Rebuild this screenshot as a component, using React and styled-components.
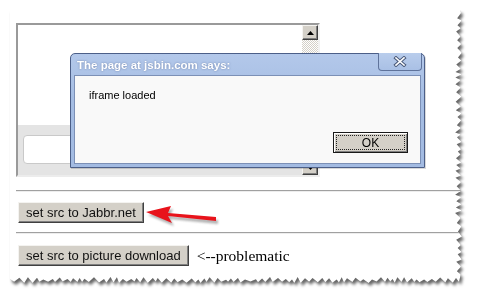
import React from 'react';
import styled, { createGlobalStyle } from 'styled-components';

const GlobalStyle = createGlobalStyle`
  html, body { margin: 0; padding: 0; background: #ffffff; }
  body { font-family: "Liberation Sans", Arial, sans-serif; }
`;

const PAPER_W = 452;
const PAPER_H = 273;

function tornPolygon(W, H, dR, dB) {
  let seed = 11;
  const rnd = () => {
    seed = (seed * 9301 + 49297) % 233280;
    return seed / 233280;
  };
  const pts = ['0px 0px', `${W - 2}px 0px`];
  let y = 3;
  let out = true;
  while (y < H - dB - 2) {
    const x = out ? W - rnd() * 1.5 : W - dR * (0.55 + rnd() * 0.45);
    pts.push(`${x.toFixed(1)}px ${y.toFixed(1)}px`);
    y += 2 + rnd() * 3.5;
    out = !out;
  }
  pts.push(`${W - 3}px ${H - 1}px`);
  let x = W - 6;
  out = false;
  while (x > 3) {
    const yy = out ? H - rnd() * 1.5 : H - dB * (0.55 + rnd() * 0.45);
    pts.push(`${x.toFixed(1)}px ${yy.toFixed(1)}px`);
    x -= 2 + rnd() * 3.5;
    out = !out;
  }
  pts.push(`0px ${H - 4}px`);
  return `polygon(${pts.join(', ')})`;
}

const TORN = tornPolygon(PAPER_W, PAPER_H, 7, 6);

const Stage = styled.div`
  padding: 10px 0 0 10px;
  width: 481px;
  height: 300px;
  box-sizing: border-box;
  overflow: hidden;
`;

const Shadow = styled.div`
  width: ${PAPER_W}px;
  filter: drop-shadow(0 0 0.6px rgba(0, 0, 0, 0.25)) drop-shadow(2px 3px 1.5px rgba(0, 0, 0, 0.6));
`;

const Paper = styled.div`
  position: relative;
  width: ${PAPER_W}px;
  height: ${PAPER_H}px;
  background: #ffffff;
  clip-path: ${TORN};
  box-sizing: border-box;
  padding: 13px 0 0 6px;
  display: flex;
  flex-direction: column;
`;

const Frame = styled.div`
  width: 304px;
  height: 154px;
  box-sizing: border-box;
  border: 2px solid;
  border-color: #9a9a9a #f2f2f2 #ececec #9a9a9a;
  display: flex;
`;

const FrameBody = styled.div`
  flex: 1;
  display: flex;
  flex-direction: column;
`;

const FrameTop = styled.div`
  flex: 1;
  background: #ffffff;
`;

const GrayBand = styled.div`
  height: 50px;
  background: #e4e4e4;
  box-sizing: border-box;
  padding: 10px 0 0 5px;
`;

const InputBox = styled.div`
  width: 262px;
  height: 29px;
  box-sizing: border-box;
  background: #ffffff;
  border: 1px solid #c9c9c9;
  border-radius: 4px;
`;

const Scrollbar = styled.div`
  width: 16px;
  display: flex;
  flex-direction: column;
`;

const ScrollButton = styled.div`
  height: 15px;
  box-sizing: border-box;
  background: #d4d0c8;
  border: 1px solid;
  border-color: #f4f3f0 #404040 #404040 #f4f3f0;
  box-shadow: inset -1px -1px 0 #808080;
  display: flex;
  align-items: center;
  justify-content: center;
`;

const Track = styled.div`
  flex: 1;
  background-image: conic-gradient(#ffffff 25%, #d4d0c8 0 50%, #ffffff 0 75%, #d4d0c8 0);
  background-size: 2px 2px;
`;

const Rule = styled.div`
  height: 0;
  border-top: 1px solid #a0a0a0;
  border-bottom: 1px solid #ededed;
  margin-top: ${(p) => p.$top}px;
`;

const Row = styled.div`
  position: relative;
  display: flex;
  align-items: center;
  gap: 8px;
  margin-top: ${(p) => p.$top}px;
  padding-left: 2px;
`;

const WinButton = styled.div`
  height: 21px;
  box-sizing: border-box;
  padding: 0 7px 0 7px;
  background: #d4d0c8;
  border: 1px solid;
  border-color: #f4f3f0 #404040 #404040 #f4f3f0;
  box-shadow: inset -1px -1px 0 #808080;
  font-family: "Liberation Sans", Arial, sans-serif;
  font-size: 13px;
  color: #111;
  display: flex;
  align-items: center;
  white-space: nowrap;
`;

const Note = styled.span`
  font-family: "Liberation Serif", "Times New Roman", serif;
  font-size: 15.5px;
  color: #000;
`;

const ArrowMark = styled.svg`
  position: absolute;
  left: 127px;
  top: 0px;
`;

const Dialog = styled.div`
  position: absolute;
  left: 60px;
  top: 43px;
  width: 355px;
  height: 115px;
  box-sizing: border-box;
  border: 1px solid #4c5f88;
  border-radius: 5px 5px 0 0;
  background: linear-gradient(#b3c8ea, #a5bde3 40%, #a3bbe2);
  padding: 0 3px 3px 3px;
  display: flex;
  flex-direction: column;
  box-shadow: 1px 1px 0 rgba(0, 0, 0, 0.15);
`;

const TitleBar = styled.div`
  position: relative;
  height: 21px;
  display: flex;
  align-items: center;
  padding-left: 3px;
  font-family: "Liberation Sans", Tahoma, sans-serif;
  font-weight: bold;
  font-size: 11.5px;
  color: #ffffff;
  text-shadow: 0 0 2px rgba(40, 60, 110, 0.5);
`;

const CloseButton = styled.div`
  position: absolute;
  top: -1px;
  right: -1px;
  width: 44px;
  height: 18px;
  box-sizing: border-box;
  border: 1px solid #5f739b;
  border-top: none;
  border-radius: 0 0 4px 4px;
  background: linear-gradient(#b9cdec, #a9c0e5);
  display: flex;
  align-items: center;
  justify-content: center;
`;

const DialogBody = styled.div`
  flex: 1;
  background: #f9f9f9;
  border: 1px solid #7c90b6;
  display: flex;
  flex-direction: column;
  padding: 13px 0 0 14px;
  font-family: "Liberation Sans", Tahoma, sans-serif;
  font-size: 11px;
  color: #000;
`;

const Actions = styled.div`
  margin-top: auto;
  display: flex;
  justify-content: flex-end;
  padding: 0 12px 10px 0;
`;

const OkButton = styled.div`
  width: 75px;
  height: 21px;
  box-sizing: border-box;
  background: #d4d0c8;
  border: 1px solid #1a1a1a;
  box-shadow: inset 1px 1px 0 #ffffff, inset -1px -1px 0 #808080;
  display: flex;
  align-items: center;
  justify-content: center;
  padding: 2px;
`;

const FocusRing = styled.div`
  flex: 1;
  align-self: stretch;
  border: 1px dotted #222;
  display: flex;
  align-items: center;
  justify-content: center;
  font-size: 12px;
  font-family: "Liberation Sans", Tahoma, sans-serif;
`;

export default function App() {
  return (
    <>
      <GlobalStyle />
      <Stage>
        <Shadow>
          <Paper>
            <Frame>
              <FrameBody>
                <FrameTop />
                <GrayBand>
                  <InputBox />
                </GrayBand>
              </FrameBody>
              <Scrollbar>
                <ScrollButton>
                  <svg width="7" height="4" viewBox="0 0 7 4">
                    <path d="M3.5 0 L7 4 L0 4 Z" fill="#000" />
                  </svg>
                </ScrollButton>
                <Track />
                <ScrollButton>
                  <svg width="7" height="4" viewBox="0 0 7 4">
                    <path d="M0 0 L7 0 L3.5 4 Z" fill="#000" />
                  </svg>
                </ScrollButton>
              </Scrollbar>
            </Frame>

            <Rule $top={13} />
            <Row $top={10}>
              <WinButton>set src to Jabbr.net</WinButton>
              <ArrowMark width="84" height="28" viewBox="0 0 84 28">
                <defs>
                  <filter id="ablur" x="-20%" y="-50%" width="140%" height="200%">
                    <feGaussianBlur stdDeviation="1.2" />
                  </filter>
                </defs>
                <g transform="translate(2 3)" opacity="0.45" filter="url(#ablur)">
                  <path d="M3 10 L28 4 L25 11 L73 15 L73 19 L25 14 L29 21 Z" fill="#555" />
                </g>
                <path d="M3 10 L28 4 L25 11 L73 15 L73 19 L25 14 L29 21 Z" fill="#e8131b" />
              </ArrowMark>
            </Row>
            <Rule $top={9} />
            <Row $top={11}>
              <WinButton>set src to picture download</WinButton>
              <Note>&lt;--problematic</Note>
            </Row>

            <Dialog>
              <TitleBar>
                The page at jsbin.com says:
                <CloseButton>
                  <svg width="14" height="11" viewBox="0 0 14 11">
                    <path d="M3 2 L11 9 M11 2 L3 9" stroke="#4a5a7a" strokeWidth="3.6" strokeLinecap="square" fill="none" />
                    <path d="M3 2 L11 9 M11 2 L3 9" stroke="#ffffff" strokeWidth="1.6" strokeLinecap="square" fill="none" />
                  </svg>
                </CloseButton>
              </TitleBar>
              <DialogBody>
                iframe loaded
                <Actions>
                  <OkButton>
                    <FocusRing>OK</FocusRing>
                  </OkButton>
                </Actions>
              </DialogBody>
            </Dialog>
          </Paper>
        </Shadow>
      </Stage>
    </>
  );
}
